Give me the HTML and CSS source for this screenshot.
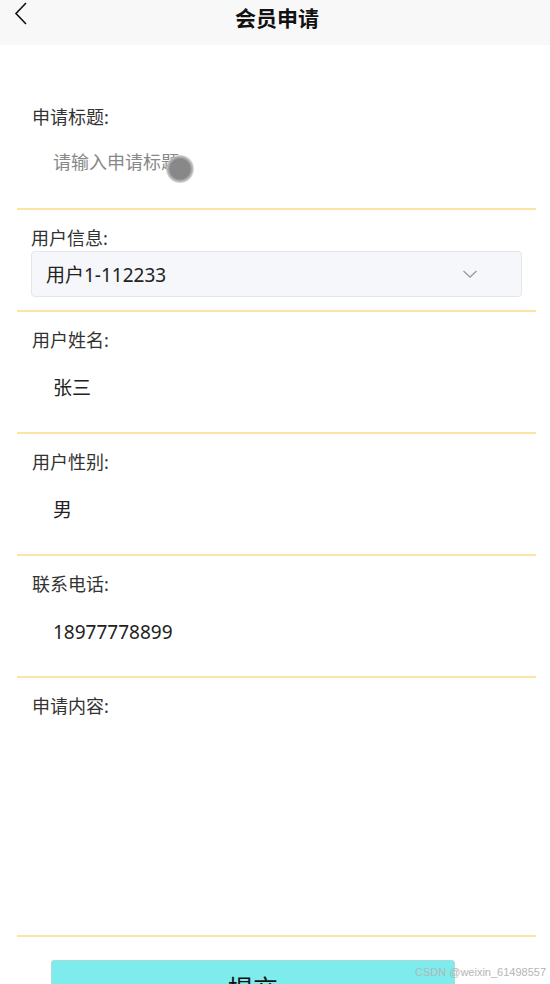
FILE: index.html
```html
<!DOCTYPE html>
<html lang="zh">
<head>
<meta charset="utf-8">
<title>会员申请</title>
<link rel="stylesheet" href="styles.css">
</head>
<body>
<div class="page">
  <header class="topbar">
    <span class="back">
      <svg width="16" height="24" viewBox="0 0 16 24"><path d="M13 2 L3 12.5 L13 23" fill="none" stroke="#111" stroke-width="1.6"/></svg>
    </span>
    <h1 class="title">会员申请</h1>
  </header>
  <form class="form">
    <div class="item first">
      <div class="label">申请标题:</div>
      <div class="value placeholder">请输入申请标题</div>
    </div>
    <div class="item select-item">
      <div class="label">用户信息:</div>
      <div class="select">
        <span>用户1-112233</span>
        <svg class="arrow" width="16" height="10" viewBox="0 0 16 10"><path d="M1.5 2 L8 8 L14.5 2" fill="none" stroke="#9a9a9a" stroke-width="1.3"/></svg>
      </div>
    </div>
    <div class="item">
      <div class="label">用户姓名:</div>
      <div class="value">张三</div>
    </div>
    <div class="item">
      <div class="label">用户性别:</div>
      <div class="value">男</div>
    </div>
    <div class="item">
      <div class="label">联系电话:</div>
      <div class="value">18977778899</div>
    </div>
    <div class="item content">
      <div class="label">申请内容:</div>
    </div>
    <div class="actions">
      <button type="button" class="submit">提交</button>
    </div>
  </form>
  <span class="touch"></span>
  <span class="watermark">CSDN @weixin_61498557</span>
</div>
</body>
</html>
```
FILE: styles.css
```css
html, body {
  margin: 0;
  padding: 0;
  overflow: hidden;
}
body {
  font-family: "Noto Sans", "Noto Sans CJK SC", sans-serif;
  color: #222;
  background: #fff;
}
.page {
  position: relative;
  width: 550px;
  height: 984px;
  overflow: hidden;
}
.topbar {
  height: 45px;
  background: #f8f8f8;
  display: flex;
  align-items: center;
  justify-content: center;
  position: relative;
}
.back {
  position: absolute;
  left: 13px;
  top: 1px;
  display: flex;
}
.title {
  margin: 0 0 12px 4px;
  font-family: "Noto Sans CJK SC", sans-serif;
  font-size: 21px;
  font-weight: 700;
  line-height: 24px;
  color: #111;
}
.form {
  padding: 60px 14px 0 17px;
}
.item {
  border-bottom: 2px solid #fce3a6;
  padding: 16px 0 32px 15px;
}
.item.first {
  padding-top: 0;
  padding-bottom: 34px;
}
.label {
  font-size: 18px;
  line-height: 24px;
  color: #333;
}
.value {
  font-size: 19px;
  line-height: 24px;
  margin-top: 24px;
  padding-left: 21px;
  color: #222;
}
.first .value {
  margin-top: 21px;
}
.placeholder {
  color: #888;
  font-size: 18px;
}
.select-item {
  padding: 16px 0 13px 14px;
}
.select {
  margin-top: 1px;
  margin-right: 14px;
  height: 44px;
  border: 1px solid #e3e6eb;
  border-radius: 4px;
  background: #f5f7fa;
  display: flex;
  align-items: center;
  justify-content: space-between;
  padding: 0 43px 0 14px;
  font-size: 19px;
  color: #222;
}
.arrow {
  display: block;
}
.content {
  height: 241px;
  padding-bottom: 0;
}
.actions {
  padding: 23px 0 0 34px;
}
.submit {
  display: block;
  width: 404px;
  height: 52px;
  background: #7eebec;
  border: 1px solid #a8dcdc;
  border-radius: 3px;
  font-family: "Noto Sans CJK SC", sans-serif;
  font-size: 25px;
  color: #111;
  padding: 1px 0 0 0;
  line-height: 30px;
  text-align: center;
  box-sizing: border-box;
}
.touch {
  position: absolute;
  left: 166px;
  top: 155px;
  width: 28px;
  height: 28px;
  border-radius: 50%;
  background: radial-gradient(circle, #888 0, #888 10px, #b0b0b0 12px, rgba(200,200,200,0.6) 14px);
}
.watermark {
  position: absolute;
  left: 415px;
  top: 965px;
  font-family: "Liberation Sans", sans-serif;
  font-size: 11px;
  color: #b5b5b5;
  line-height: 14px;
  white-space: nowrap;
}
```
